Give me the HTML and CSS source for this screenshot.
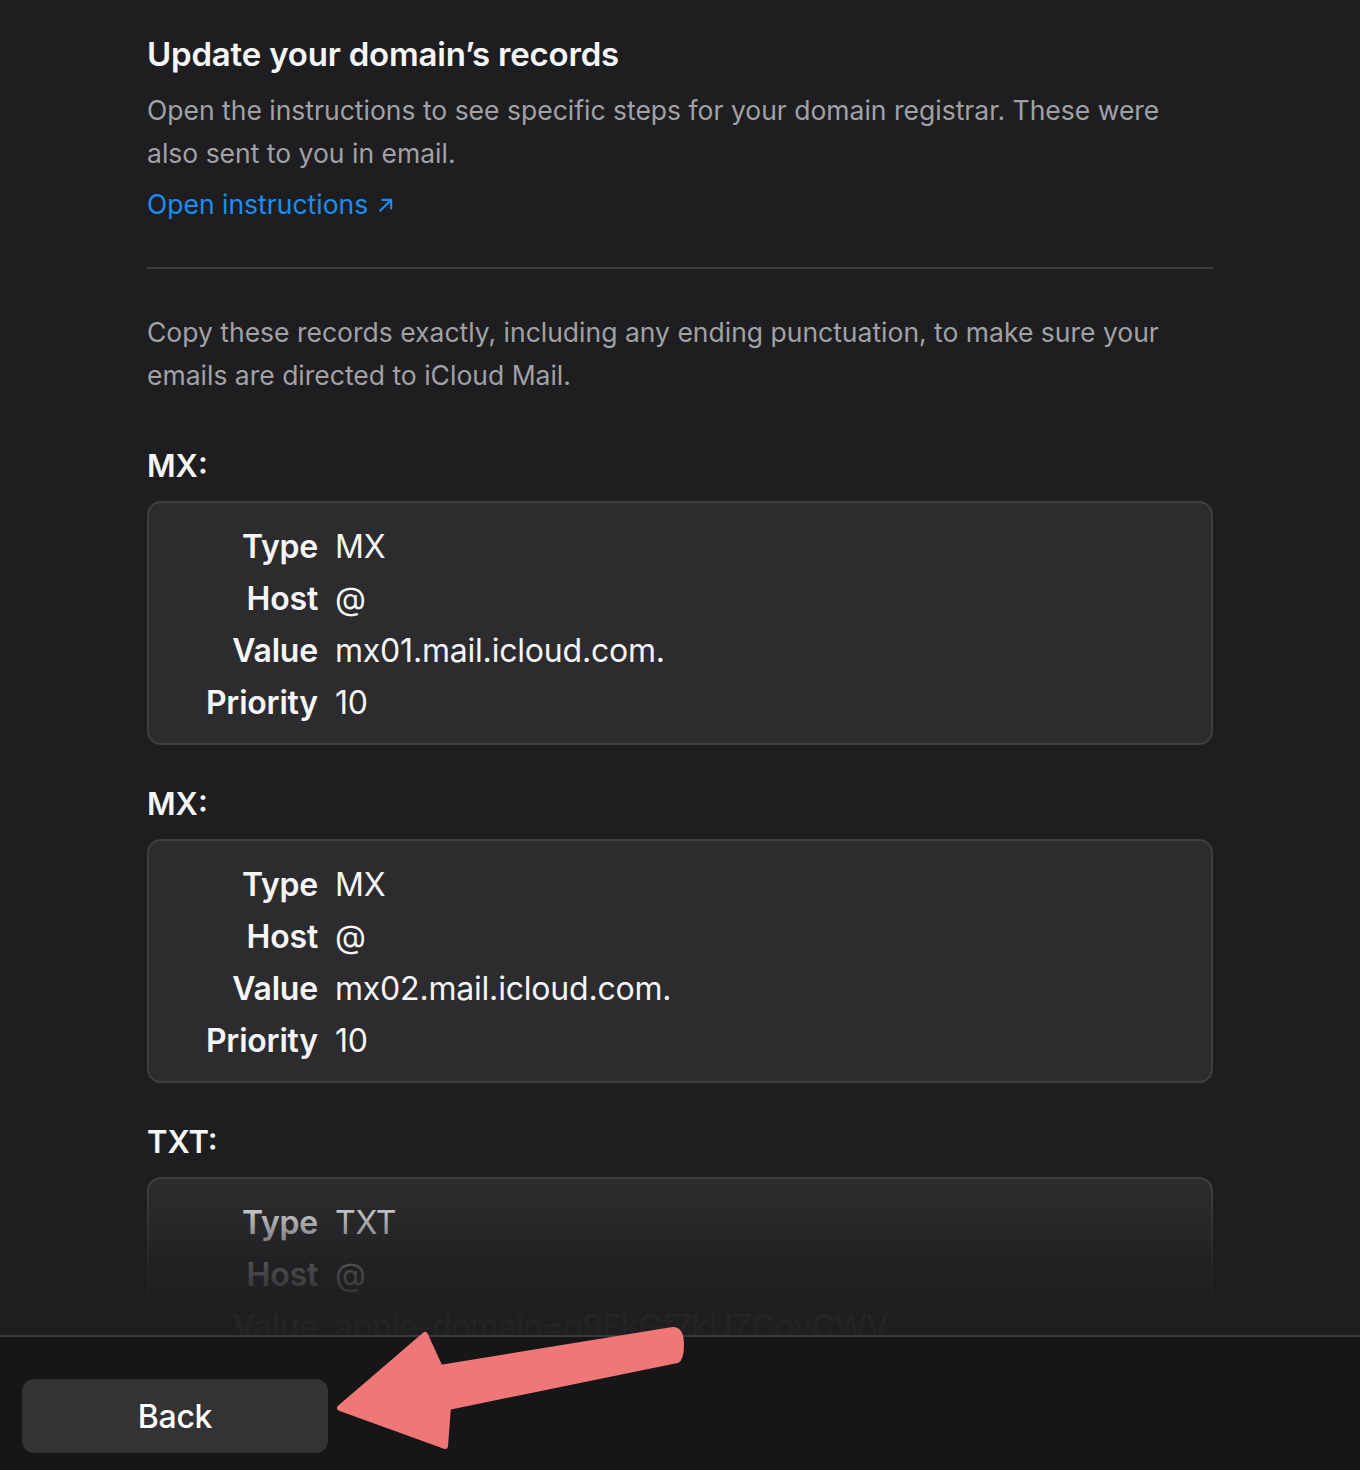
FILE: index.html
```html
<!DOCTYPE html>
<html lang="en">
<head>
<meta charset="utf-8">
<title>Update your domain's records</title>
<link rel="stylesheet" href="styles.css">
</head>
<body>
<div class="page">
  <main class="scroll">
    <div class="content">
      <h1 class="title">Update your domain’s records</h1>
      <p class="desc">Open the instructions to see specific steps for your domain registrar. These were also sent to you in email.</p>
      <a class="link" href="#">Open instructions <svg class="ext" viewBox="0 0 16 16" width="18" height="18"><path d="M2.8 13.2 L12.4 3.6 M4.8 3.4 H12.6 V11.2" fill="none" stroke="currentColor" stroke-width="1.9" stroke-linecap="round" stroke-linejoin="round"/></svg></a>
      <hr class="divider">
      <p class="desc">Copy these records exactly, including any ending punctuation, to make sure your emails are directed to iCloud Mail.</p>

      <section class="record">
        <h2 class="rec-title">MX:</h2>
        <dl class="rec-box">
          <dt>Type</dt><dd>MX</dd>
          <dt>Host</dt><dd>@</dd>
          <dt>Value</dt><dd>mx01.mail.icloud.com.</dd>
          <dt>Priority</dt><dd>10</dd>
        </dl>
      </section>

      <section class="record">
        <h2 class="rec-title">MX:</h2>
        <dl class="rec-box">
          <dt>Type</dt><dd>MX</dd>
          <dt>Host</dt><dd>@</dd>
          <dt>Value</dt><dd>mx02.mail.icloud.com.</dd>
          <dt>Priority</dt><dd>10</dd>
        </dl>
      </section>

      <section class="record">
        <h2 class="rec-title">TXT:</h2>
        <dl class="rec-box">
          <dt>Type</dt><dd>TXT</dd>
          <dt>Host</dt><dd>@</dd>
          <dt>Value</dt><dd>apple-domain=q9FkGf7kUZCqvCWV</dd>
          <dt>TTL</dt><dd>3600</dd>
        </dl>
      </section>
    </div>
    <div class="fade"></div>
  </main>
  <footer class="footer">
    <button class="back" type="button">Back</button>
  </footer>
  <svg class="annotation" width="360" height="140" viewBox="330 1320 360 140">
    <path d="M340 1408 L425 1335 L440 1368 L673 1330 Q681 1330 681 1345 Q681 1358 677 1360 L448 1407 L445 1446 Z" fill="#ef7777" stroke="#ef7777" stroke-width="6" stroke-linejoin="round"/>
  </svg>
</div>
</body>
</html>
```

FILE: styles.css
```css
* { box-sizing: border-box; }

html, body {
  margin: 0;
  padding: 0;
  background: #1e1e20;
}

body {
  font-family: Inter, "Noto Sans", "Liberation Sans", sans-serif;
  color: #f5f5f7;
}

.page {
  position: relative;
  width: 1360px;
  height: 1470px;
  display: flex;
  flex-direction: column;
  overflow: hidden;
}

.scroll {
  position: relative;
  height: 1335px;
  flex: none;
  overflow: hidden;
  background: #1e1e20;
}

.content {
  width: 1066px;
  margin-left: 147px;
  padding-top: 34px;
}

.title {
  margin: 0;
  font-size: 33px;
  line-height: 40px;
  font-weight: 600;
  letter-spacing: -0.2px;
  color: #f5f5f7;
}

.desc {
  margin: 15px 0 0;
  font-size: 26.5px;
  line-height: 43px;
  color: #a1a1a6;
  letter-spacing: 0;
}

.link {
  display: inline-flex;
  align-items: center;
  gap: 9px;
  margin-top: 10px;
  font-size: 26.5px;
  line-height: 38px;
  color: #1a8df2;
  text-decoration: none;
  letter-spacing: 0;
}

.ext { margin-top: 1px; }

.divider {
  border: 0;
  height: 2px;
  background: #3a3a3c;
  margin: 44px 0 42px;
}

.divider + .desc { margin-top: 0; }

.record { margin-top: 50px; }
.record + .record { margin-top: 40px; }

.rec-title {
  margin: 0 0 16px;
  font-size: 31px;
  line-height: 38px;
  font-weight: 600;
  color: #f5f5f7;
}

.rec-box {
  margin: 0;
  display: grid;
  grid-template-columns: 169px auto;
  column-gap: 17px;
  justify-content: start;
  padding: 18px 0 14px;
  background: #2c2c2e;
  border: 2px solid #3f3f42;
  border-radius: 14px;
}

.rec-box dt,
.rec-box dd {
  margin: 0;
  font-size: 32px;
  line-height: 52px;
  letter-spacing: -0.2px;
}

.rec-box dt {
  text-align: right;
  font-weight: 600;
  color: #f5f5f7;
}

.rec-box dd {
  font-weight: 400;
  color: #f5f5f7;
}

.fade {
  position: absolute;
  left: 0;
  right: 0;
  bottom: 0;
  height: 150px;
  background: linear-gradient(to bottom,
    rgba(30,30,32,0) 0%,
    rgba(30,30,32,0.35) 25%,
    rgba(30,30,32,0.8) 55%,
    rgba(30,30,32,0.96) 85%,
    rgba(30,30,32,0.98) 100%);
  pointer-events: none;
}

.footer {
  flex: 1;
  background: #161618;
  border-top: 2px solid #3a3a3c;
  padding: 42px 22px 0;
}

.back {
  width: 306px;
  height: 74px;
  border: 0;
  border-radius: 12px;
  background: #333336;
  color: #ffffff;
  font-family: Inter, "Noto Sans", "Liberation Sans", sans-serif;
  font-size: 32px;
  font-weight: 500;
  letter-spacing: -0.3px;
}

.annotation {
  position: absolute;
  left: 330px;
  top: 1320px;
}
```
